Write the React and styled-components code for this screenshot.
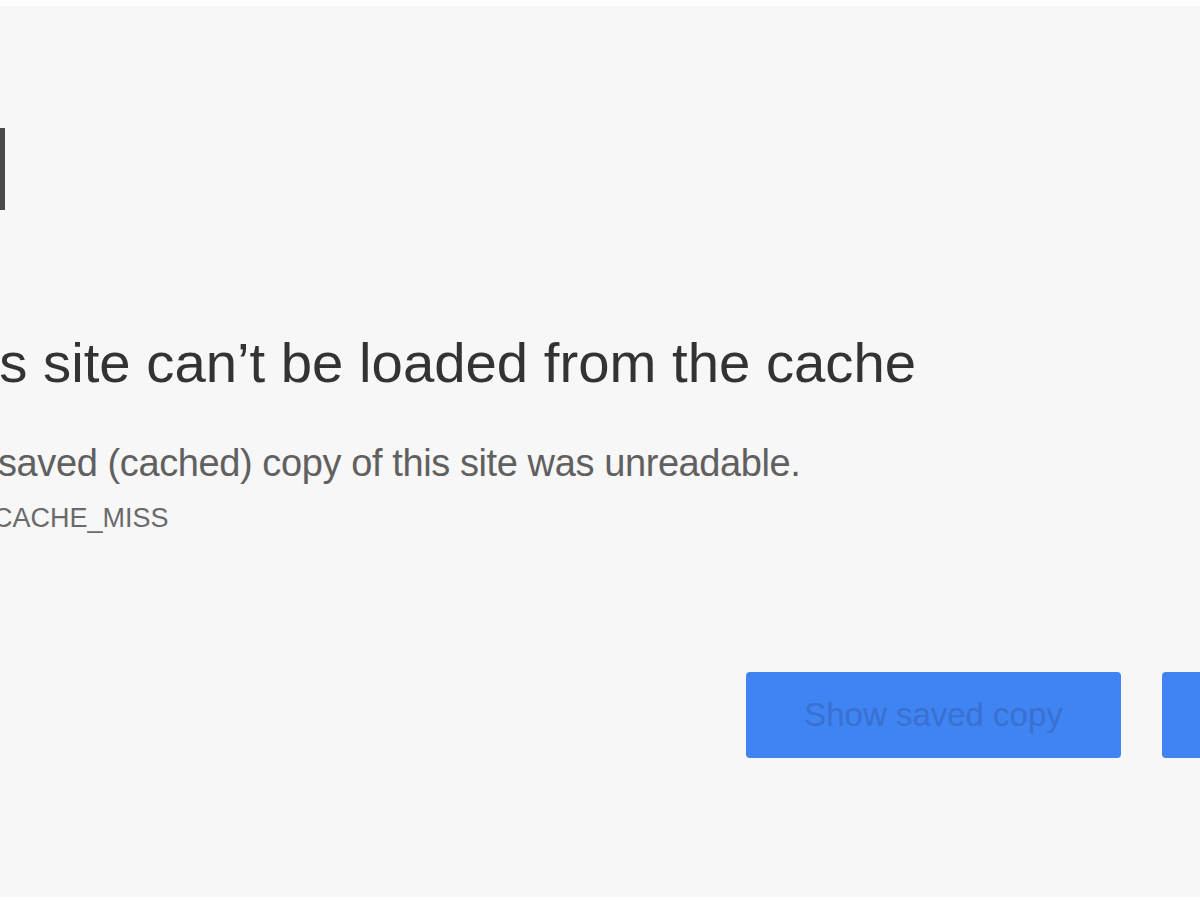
import styled, { createGlobalStyle } from 'styled-components';

const GlobalStyle = createGlobalStyle`
  html, body {
    margin: 0;
    padding: 0;
    background: #ffffff;
  }
  * {
    box-sizing: border-box;
  }
`

const PageIcon = () => (
  <svg width="72" height="82" viewBox="0 0 72 82" fill="none">
    <path d="M3 2.5h66.5v77H3z" stroke="#4a4a4a" strokeWidth="5" />
  </svg>
)

export default function App() {
  return (
    <>
      <GlobalStyle />
      <StyledPage>
        <StyledContent>
          <StyledIcon>
            <PageIcon />
          </StyledIcon>
          <StyledHeading>This site can’t be loaded from the cache</StyledHeading>
          <StyledMessage>A saved (cached) copy of this site was unreadable.</StyledMessage>
          <StyledCode>ERR_CACHE_MISS</StyledCode>
          <StyledButtons>
            <StyledButton>Show saved copy</StyledButton>
            <StyledButton>Reload</StyledButton>
          </StyledButtons>
        </StyledContent>
      </StyledPage>
    </>
  )
}

const StyledPage = styled.main`
  width: 1200px;
  height: 900px;
  overflow: hidden;
  background: #f7f7f7;
  border-top: 6px solid #fdfdfd;
  border-bottom: 3px solid #ffffff;
  padding-top: 122px;
  font-family: "Liberation Sans", Arial, sans-serif;
`

const StyledContent = styled.div`
  margin-left: -79px;
  display: flex;
  flex-flow: column nowrap;
  align-items: flex-start;
`

const StyledIcon = styled.div`
  margin-left: 12px;
  height: 82px;
  display: flex;
`

const StyledHeading = styled.h1`
  margin: 118px 0 0 0;
  font-size: 56.3px;
  line-height: 70px;
  font-weight: 400;
  color: #333333;
  white-space: nowrap;
`

const StyledMessage = styled.p`
  margin: 40px 0 0 44px;
  font-size: 38px;
  line-height: 50px;
  letter-spacing: -0.4px;
  color: #606060;
  white-space: nowrap;
`

const StyledCode = styled.p`
  margin: 13px 0 0 0;
  font-size: 27px;
  line-height: 35px;
  color: #6a6a6a;
  text-transform: uppercase;
  white-space: nowrap;
`

const StyledButtons = styled.div`
  margin: 136px 0 0 825px;
  display: flex;
  gap: 41px;
`

const StyledButton = styled.button`
  flex: none;
  width: 375px;
  height: 86px;
  border: none;
  border-radius: 4px;
  background: #3f84f2;
  color: #3a70d0;
  font-family: inherit;
  font-size: 33px;
  font-weight: 500;
  cursor: pointer;
`
